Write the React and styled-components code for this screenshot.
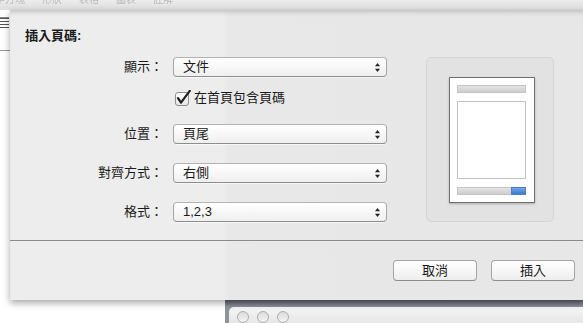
import React from "react";
import styled, { createGlobalStyle } from "styled-components";

const Global = createGlobalStyle`
  html, body { margin: 0; padding: 0; }
  body {
    width: 583px;
    height: 323px;
    overflow: hidden;
    background: #ffffff;
    font-family: "Liberation Sans", "Noto Sans CJK TC", sans-serif;
    color: #1a1a1a;
  }
`;

const Stage = styled.div`
  position: relative;
  width: 583px;
  height: 323px;
  overflow: hidden;
  background: #ffffff;
`;

/* ---------- backdrop (windows behind the sheet) ---------- */
const TopBar = styled.div`
  position: absolute;
  left: 0;
  top: 0;
  right: 0;
  height: 10px;
  background: linear-gradient(#ececec, #dedede);
  display: flex;
  gap: 17px;
  margin-left: -15px;
  overflow: hidden;
`;

const GhostWord = styled.span`
  font-size: 10px;
  line-height: 10px;
  margin-top: -5px;
  color: #b9b9b9;
  white-space: nowrap;
  filter: blur(0.4px);
`;

const DocStrip = styled.div`
  position: absolute;
  left: 0;
  top: 10px;
  width: 10px;
  height: 290px;
  background: #ffffff;
  display: flex;
  flex-direction: column;
`;

const DocIcon = styled.div`
  margin-top: 7px;
  width: 9px;
  height: 10px;
  background: repeating-linear-gradient(#555 0 1px, transparent 1px 3px);
  border-top: 1px solid #888;
`;

const DocRule = styled.div`
  margin-top: 22px;
  height: 1px;
  background: #9a9a9a;
`;

const BackWindow = styled.div`
  position: absolute;
  left: 225px;
  top: 300px;
  right: 0;
  bottom: 0;
  background: linear-gradient(#5f646b, #8e949c 7px);
  display: flex;
  flex-direction: column;
`;

const TitleBar = styled.div`
  margin-top: 7px;
  margin-left: 4px;
  flex: 1;
  border-top-left-radius: 5px;
  background: linear-gradient(#f6f6f6, #e6e6e6);
  display: flex;
  gap: 8px;
  padding: 4px 0 0 8px;
`;

const Light = styled.span`
  width: 12px;
  height: 12px;
  box-sizing: border-box;
  border-radius: 50%;
  border: 1px solid #adadad;
  background: linear-gradient(#dcdcdc, #f4f4f4);
`;

/* ---------- sheet ---------- */
const Sheet = styled.div`
  position: absolute;
  left: 10px;
  top: 10px;
  width: 573px;
  height: 290px;
  background: linear-gradient(
    to right,
    #ededed 0,
    #ededed 213px,
    #e8e8e8 219px,
    #e7e7e7 100%
  );
  box-shadow: 0 3px 7px rgba(0, 0, 0, 0.35),
    inset 0 5px 5px -3px rgba(0, 0, 0, 0.18);
  display: flex;
  flex-direction: column;
`;

const Title = styled.div`
  padding: 17px 0 0 15px;
  font-size: 13px;
  line-height: 17px;
  font-weight: bold;
`;

const Body = styled.div`
  margin-top: 13px;
  height: 165px;
  display: flex;
`;

const Form = styled.div`
  display: flex;
  flex-direction: column;
`;

const Row = styled.div`
  margin-top: ${(p) => p.$top || 0}px;
  height: 20px;
  display: grid;
  grid-template-columns: 153px 214px;
  column-gap: 10px;
  align-items: center;
`;

const Label = styled.span`
  text-align: right;
  font-size: 13px;
  line-height: 20px;
  white-space: nowrap;
`;

const Select = styled.div`
  position: relative;
  height: 20px;
  box-sizing: border-box;
  border: 1px solid #a6a6a6;
  border-top-color: #b4b4b4;
  border-bottom-color: #8e8e8e;
  border-radius: 4px;
  background: linear-gradient(#ffffff, #f6f6f6 60%, #efefef);
  box-shadow: 0 1px 0 rgba(255, 255, 255, 0.6);
  padding-left: 9px;
  font-size: 13px;
  line-height: 18px;
  display: flex;
  align-items: center;
`;

const Arrows = styled.svg`
  position: absolute;
  right: 5px;
  top: 4px;
`;

const CheckLine = styled.label`
  grid-column: 2;
  display: flex;
  align-items: center;
  gap: 2px;
  padding-left: 2px;
  font-size: 13px;
  line-height: 20px;
`;

const Preview = styled.div`
  margin-left: 39px;
  width: 128px;
  height: 165px;
  box-sizing: border-box;
  border: 1px solid #d5d5d5;
  border-radius: 5px;
  background: #e2e2e2;
  display: flex;
  align-items: center;
  justify-content: center;
`;

const Page = styled.div`
  width: 86px;
  height: 126px;
  margin-left: 3px;
  box-sizing: border-box;
  border: 1px solid #707070;
  background: #ffffff;
  box-shadow: 0 1px 2px rgba(0, 0, 0, 0.25);
  padding: 7px 8px 7px 7px;
  display: flex;
  flex-direction: column;
  gap: 8px;
`;

const Band = styled.div`
  height: 8px;
  box-sizing: border-box;
  border: 1px solid #c4c4c4;
  background: linear-gradient(#e4e4e4, #cdcdcd);
  display: flex;
  justify-content: flex-end;
`;

const BandMark = styled.div`
  width: 13px;
  margin: -1px -1px -1px 0;
  background: linear-gradient(#74a6e6, #3b7bd0);
  border: 1px solid #4a80c4;
`;

const PageBody = styled.div`
  flex: 1;
  border: 1px solid #c2c2c2;
  background: #ffffff;
`;

const Separator = styled.div`
  margin-top: 18px;
  height: 1px;
  background: #8b8b8b;
`;

const Footer = styled.div`
  margin-top: 19px;
  display: flex;
  justify-content: flex-end;
  gap: 14px;
  padding-right: 8px;
`;

const Button = styled.button`
  width: ${(p) => p.$w}px;
  height: 21px;
  box-sizing: border-box;
  border: 1px solid #a4a4a4;
  border-bottom-color: #8c8c8c;
  border-radius: 4px;
  background: linear-gradient(#ffffff, #f7f7f7 50%, #ededed);
  font-family: "Liberation Sans", "Noto Sans CJK TC", sans-serif;
  font-size: 13px;
  line-height: 19px;
  color: #1a1a1a;
  padding: 0;
`;

const SelectArrows = () => (
  <Arrows width="7" height="11" viewBox="0 0 7 11">
    <path d="M3.5 1 L6 4.3 L1 4.3 Z" fill="#222" />
    <path d="M3.5 10 L6 6.7 L1 6.7 Z" fill="#222" />
  </Arrows>
);

const Field = ({ label, value, top }) => (
  <Row $top={top}>
    <Label>{label}</Label>
    <Select>
      {value}
      <SelectArrows />
    </Select>
  </Row>
);

const CheckBox = () => (
  <svg width="17" height="16" viewBox="0 0 17 16">
    <defs>
      <linearGradient id="cbg" x1="0" y1="0" x2="0" y2="1">
        <stop offset="0" stopColor="#ffffff" />
        <stop offset="1" stopColor="#e6e6e6" />
      </linearGradient>
    </defs>
    <rect x="0.5" y="2.5" width="13" height="13" rx="2.5" fill="url(#cbg)" stroke="#8e8e8e" />
    <path
      d="M3 8.2 L6 12.6 L14.8 0.8"
      fill="none"
      stroke="#1e1e1e"
      strokeWidth="2.2"
      strokeLinecap="round"
      strokeLinejoin="round"
    />
  </svg>
);

export default function App() {
  return (
    <Stage>
      <Global />
      <TopBar>
        <GhostWord>文字方塊</GhostWord>
        <GhostWord>形狀</GhostWord>
        <GhostWord>表格</GhostWord>
        <GhostWord>圖表</GhostWord>
        <GhostWord>註解</GhostWord>
      </TopBar>
      <DocStrip>
        <DocIcon />
        <DocRule />
      </DocStrip>
      <BackWindow>
        <TitleBar>
          <Light />
          <Light />
          <Light />
        </TitleBar>
      </BackWindow>
      <Sheet>
        <Title>插入頁碼:</Title>
        <Body>
          <Form>
            <Field label="顯示：" value="文件" />
            <Row $top={11}>
              <CheckLine>
                <CheckBox />
                在首頁包含頁碼
              </CheckLine>
            </Row>
            <Field label="位置：" value="頁尾" top={16} />
            <Field label="對齊方式：" value="右側" top={19} />
            <Field label="格式：" value="1,2,3" top={19} />
          </Form>
          <Preview>
            <Page>
              <Band />
              <PageBody />
              <Band>
                <BandMark />
              </Band>
            </Page>
          </Preview>
        </Body>
        <Separator />
        <Footer>
          <Button $w={84}>取消</Button>
          <Button $w={84}>插入</Button>
        </Footer>
      </Sheet>
    </Stage>
  );
}
